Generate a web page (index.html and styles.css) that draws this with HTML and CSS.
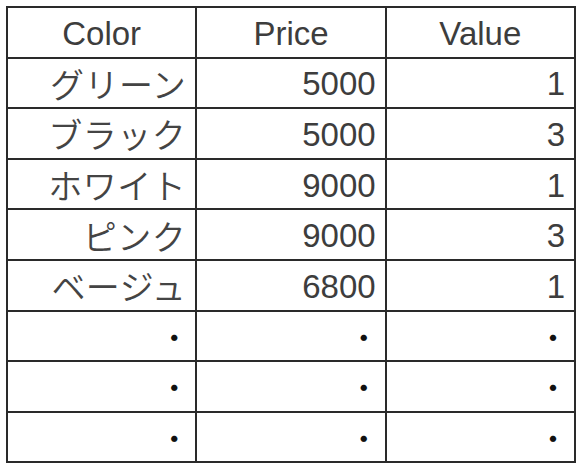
FILE: index.html
```html
<!DOCTYPE html>
<html lang="ja">
<head>
<meta charset="utf-8">
<link rel="stylesheet" href="styles.css">
</head>
<body>
<table class="grid">
  <thead>
    <tr><th>Color</th><th>Price</th><th>Value</th></tr>
  </thead>
  <tbody>
    <tr><td class="jp">グリーン</td><td>5000</td><td>1</td></tr>
    <tr><td class="jp">ブラック</td><td>5000</td><td>3</td></tr>
    <tr><td class="jp">ホワイト</td><td>9000</td><td>1</td></tr>
    <tr><td class="jp">ピンク</td><td>9000</td><td>3</td></tr>
    <tr><td class="jp">ベージュ</td><td>6800</td><td>1</td></tr>
    <tr class="dots"><td>・</td><td>・</td><td>・</td></tr>
    <tr class="dots"><td>・</td><td>・</td><td>・</td></tr>
    <tr class="dots"><td>・</td><td>・</td><td>・</td></tr>
  </tbody>
</table>
</body>
</html>
```
FILE: styles.css
```css
html, body {
  margin: 0;
  padding: 0;
  background: #ffffff;
}

body {
  padding: 6px 0 0 6px;
}

.grid {
  border-collapse: collapse;
  width: 570px;
  table-layout: fixed;
  font-family: "Liberation Sans", "Noto Sans CJK JP", sans-serif;
  font-size: 33px;
  color: #3d3d3d;
}

.grid th,
.grid td {
  border: 2px solid #2a2a2a;
  height: 46.6px;
  padding: 2px 9px 0;
  line-height: 1;
  vertical-align: middle;
  overflow: hidden;
}

.grid th {
  font-weight: normal;
  text-align: center;
}

.grid td {
  text-align: right;
}

.grid td.jp {
  font-family: "Noto Sans CJK JP DemiLight", "Noto Sans CJK JP Light", "Noto Sans CJK JP", sans-serif;
  font-weight: 300;
  font-size: 34px;
  letter-spacing: 0.5px;
  color: #444444;
}

.grid .dots td {
  font-family: "Noto Sans CJK JP", sans-serif;
  font-size: 30px;
  color: #111111;
  padding: 0 6px 0 9px;
  height: 48.6px;
}
```
